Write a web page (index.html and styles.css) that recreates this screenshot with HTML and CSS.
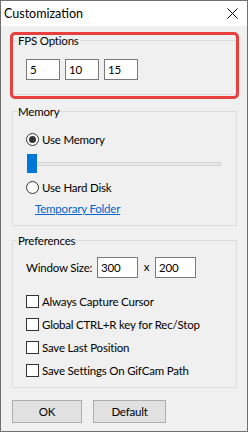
FILE: index.html
```html
<!DOCTYPE html>
<html lang="en">
<head>
    <meta charset="UTF-8">
    <title>Customization</title>
    <link rel="stylesheet" href="styles.css">
</head>
<body>
    <div class="window">
        <!-- Title Bar -->
        <div class="titlebar">
            <span class="title">Customization</span>
            <svg class="close" width="11" height="11" viewBox="0 0 11 11">
                <path d="M0.5 0.5L10.5 10.5M10.5 0.5L0.5 10.5" stroke="#000" stroke-width="1" fill="none"/>
            </svg>
        </div>

        <div class="content">
            <!-- FPS Options -->
            <div class="group group-fps">
                <span class="group-title">FPS Options</span>
                <div class="fps-row">
                    <input class="field fps" value="5">
                    <input class="field fps" value="10">
                    <input class="field fps" value="15">
                </div>
                <div class="highlight"></div>
            </div>

            <!-- Memory -->
            <div class="group group-memory">
                <span class="group-title">Memory</span>
                <div class="option first">
                    <span class="radio checked"></span>
                    <span>Use Memory</span>
                </div>
                <div class="slider">
                    <div class="track"></div>
                    <div class="thumb"></div>
                </div>
                <div class="option">
                    <span class="radio"></span>
                    <span>Use Hard Disk</span>
                </div>
                <a class="link" href="#">Temporary Folder</a>
            </div>

            <!-- Preferences -->
            <div class="group group-prefs">
                <span class="group-title">Preferences</span>
                <div class="size-row">
                    <span class="size-label">Window Size:</span>
                    <input class="field size" value="300">
                    <span class="times">x</span>
                    <input class="field size" value="200">
                </div>
                <div class="check first">
                    <span class="box"></span>
                    <span>Always Capture Cursor</span>
                </div>
                <div class="check">
                    <span class="box"></span>
                    <span>Global CTRL+R key for Rec/Stop</span>
                </div>
                <div class="check">
                    <span class="box"></span>
                    <span>Save Last Position</span>
                </div>
                <div class="check">
                    <span class="box"></span>
                    <span>Save Settings On GifCam Path</span>
                </div>
            </div>

            <!-- Buttons -->
            <div class="buttons">
                <button class="btn btn-ok">OK</button>
                <button class="btn btn-default">Default</button>
            </div>
        </div>
    </div>
</body>
</html>
```

FILE: styles.css
```css
/* Page */
body {
    margin: 0;
    font-family: 'Lato', 'Liberation Sans', sans-serif;
    font-size: 11.5px;
    letter-spacing: -0.2px;
    color: #000;
    white-space: nowrap;
}

.window {
    width: 248px;
    height: 432px;
    box-sizing: border-box;
    border: 1px solid #707070;
    background: #f0f0f0;
    overflow: hidden;
}

/* Title Bar */
.titlebar {
    height: 25px;
    background: #fff;
    display: flex;
    align-items: center;
    padding-left: 3px;
}

.title {
    font-size: 12.5px;
    letter-spacing: 0;
    line-height: 16px;
}

.close {
    margin-left: auto;
    margin-right: 9px;
}

.content {
    padding: 0 10px 0 11px;
}

/* Group Boxes */
.group {
    position: relative;
    border: 1px solid #dcdcdc;
}

.group-title {
    display: block;
    width: max-content;
    margin: -7px 0 0 4px;
    padding: 0 1px;
    line-height: 14px;
    background: #f0f0f0;
}

.group-fps {
    margin-top: 14px;
}

.group-memory {
    margin-top: 16px;
    padding-bottom: 9px;
}

.group-prefs {
    margin-top: 14px;
    padding-bottom: 9px;
}

/* Red annotation box */
.highlight {
    position: absolute;
    left: -3px;
    top: -9px;
    width: 223px;
    height: 61px;
    border: 3px solid #e8403c;
    border-radius: 5px;
}

/* Text Fields */
.field {
    box-sizing: border-box;
    height: 21px;
    margin: 0;
    padding: 0 0 0 3px;
    border: 1px solid #7a7a7a;
    background: #fff;
    font-family: inherit;
    font-size: 11.5px;
    letter-spacing: inherit;
    color: #000;
    outline: none;
    flex-shrink: 0;
}

.fps-row {
    display: flex;
    gap: 5px;
    margin: 11px 0 14px 13px;
}

.fps {
    width: 34px;
}

/* Radio options */
.option {
    display: flex;
    align-items: center;
    gap: 3px;
    height: 15px;
    margin: 7px 0 0 13px;
}

.option.first {
    margin-top: 13px;
}

.radio {
    position: relative;
    width: 13px;
    height: 13px;
    box-sizing: border-box;
    border: 1px solid #333;
    border-radius: 50%;
    background: #fff;
}

.radio.checked::after {
    content: "";
    position: absolute;
    left: 2px;
    top: 2px;
    width: 7px;
    height: 7px;
    border-radius: 50%;
    background: #333;
}

/* Slider */
.slider {
    position: relative;
    width: 194px;
    height: 19px;
    margin: 7px 0 0 14px;
}

.track {
    position: absolute;
    left: 0;
    right: 0;
    top: 8px;
    height: 4px;
    box-sizing: border-box;
    border: 1px solid #d6d6d6;
    background: #e7e7e7;
}

.thumb {
    position: absolute;
    left: 0;
    top: 0;
    width: 10px;
    height: 19px;
    background: #0078d7;
}

.link {
    display: block;
    width: max-content;
    margin: 7px 0 0 22px;
    line-height: 14px;
    color: #0066cc;
}

/* Preferences */
.size-row {
    display: flex;
    align-items: center;
    margin: 9px 0 0 13px;
}

.size-label {
    width: 71px;
    flex-shrink: 0;
}

.size {
    width: 41px;
}

.times {
    width: 17px;
    flex-shrink: 0;
    text-align: center;
    margin-top: -3px;
}

.check {
    display: flex;
    align-items: center;
    gap: 3px;
    height: 15px;
    margin: 8px 0 0 13px;
}

.check.first {
    margin-top: 16px;
}

.box {
    width: 13px;
    height: 13px;
    flex-shrink: 0;
    box-sizing: border-box;
    border: 1px solid #333;
    background: #fff;
}

/* Buttons */
.buttons {
    display: flex;
    gap: 11px;
    margin-top: 12px;
}

.btn {
    height: 23px;
    margin: 0;
    padding: 0;
    border: 1px solid #adadad;
    background: #e1e1e1;
    font-family: inherit;
    font-size: 11.5px;
    letter-spacing: inherit;
    color: #000;
}

.btn-ok {
    width: 70px;
}

.btn-default {
    width: 73px;
}
```
